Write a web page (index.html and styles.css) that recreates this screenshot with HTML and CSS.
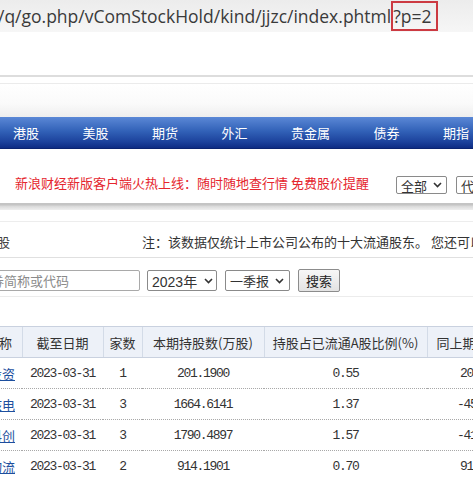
FILE: index.html
```html
<!DOCTYPE html>
<html lang="zh-CN">
<head>
<meta charset="utf-8">
<title>十大流通股东</title>
<link rel="stylesheet" href="styles.css">
</head>
<body>
<div class="page">
  <div class="urlbar"><span class="url">/q/go.php/vComStockHold/kind/jjzc/index.phtml</span><span class="hl">?p=2</span></div>
  <div class="rule-top"></div>
  <div class="band"></div>
  <nav class="nav">
    <a>港股</a><a>美股</a><a>期货</a><a>外汇</a><a>贵金属</a><a>债券</a><a>期指</a>
  </nav>
  <div class="promo">
    <span class="promo-text">新浪财经新版客户端火热上线：随时随地查行情 免费股价提醒</span>
    <span class="box box-all">全部<svg class="chev" width="9" height="6" viewBox="0 0 9 6"><path d="M1 1l3.5 3.5L8 1" fill="none" stroke="#333" stroke-width="1.6"/></svg></span>
    <span class="box box-code">代码</span>
  </div>
  <div class="sep"></div>
  <div class="notice">
    <span class="title">基金持股</span>
    <span class="note">注：该数据仅统计上市公司公布的十大流通股东。 您还可以</span>
  </div>
  <div class="search">
    <span class="input">请输入证券简称或代码</span>
    <span class="box box-year">2023年<svg class="chev" width="9" height="6" viewBox="0 0 9 6"><path d="M1 1l3.5 3.5L8 1" fill="none" stroke="#333" stroke-width="1.6"/></svg></span>
    <span class="box box-q">一季报<svg class="chev" width="9" height="6" viewBox="0 0 9 6"><path d="M1 1l3.5 3.5L8 1" fill="none" stroke="#333" stroke-width="1.6"/></svg></span>
    <span class="btn">搜索</span>
  </div>
  <table class="grid">
    <colgroup>
      <col class="w1"><col class="w2"><col class="w3"><col class="w4"><col class="w5"><col class="w6">
    </colgroup>
    <thead>
      <tr>
        <th class="c1">机构名称</th>
        <th>截至日期</th>
        <th>家数</th>
        <th>本期持股数(万股)</th>
        <th>持股占已流通A股比例(%)</th>
        <th class="c6">同上期增减(万股)</th>
      </tr>
    </thead>
    <tbody>
      <tr>
        <td class="c1"><a>国新投资</a></td>
        <td class="num">2023-03-31</td>
        <td class="num">1</td>
        <td class="num">201.1900</td>
        <td class="num">0.55</td>
        <td class="num last">201.1900</td>
      </tr>
      <tr>
        <td class="c1"><a>中国核电</a></td>
        <td class="num">2023-03-31</td>
        <td class="num">3</td>
        <td class="num">1664.6141</td>
        <td class="num">1.37</td>
        <td class="num last neg">-456.2310</td>
      </tr>
      <tr>
        <td class="c1"><a>华夏科创</a></td>
        <td class="num">2023-03-31</td>
        <td class="num">3</td>
        <td class="num">1790.4897</td>
        <td class="num">1.57</td>
        <td class="num last neg">-412.0870</td>
      </tr>
      <tr>
        <td class="c1"><a>顺丰物流</a></td>
        <td class="num">2023-03-31</td>
        <td class="num">2</td>
        <td class="num">914.1901</td>
        <td class="num">0.70</td>
        <td class="num last">914.1901</td>
      </tr>
    </tbody>
  </table>
</div>
</body>
</html>
```

FILE: styles.css
```css
html, body {
  margin: 0;
  padding: 0;
  background: #fff;
}
body {
  width: 473px;
  height: 477px;
  overflow: hidden;
  font-family: "Noto Sans CJK SC", "Noto Sans", sans-serif;
  color: #333;
}
.page {
  width: 473px;
  overflow: hidden;
}

/* address bar */
.urlbar {
  height: 32px;
  background: linear-gradient(#ececec, #f6f6f6);
  display: flex;
  align-items: center;
  margin-left: -2px;
  font-family: "Open Sans", "Noto Sans", sans-serif;
  font-size: 17.5px;
  color: #3a3a3a;
  white-space: nowrap;
}
.url, .hl {
  flex: none;
}
.hl {
  height: 30px;
  box-sizing: border-box;
  border: 2px solid #cc3a42;
  display: inline-flex;
  align-items: center;
  padding: 0 5px 0 0;
}

.rule-top {
  margin-top: 43px;
  height: 2px;
  background: #dddddd;
  border-bottom: 6px solid #fff;
}
.band {
  height: 34px;
  border-top: 1px solid #ebebeb;
  box-sizing: border-box;
  background: linear-gradient(#ffffff, #fafafa 60%, #eeeeee);
}

/* blue navigation */
.nav {
  height: 32px;
  display: flex;
  align-items: center;
  gap: 43.5px;
  padding-left: 13px;
  background: linear-gradient(#5b88d6, #3262b8 45%, #1c429c 80%, #0e2c84);
  border-bottom: 1px solid #0b2470;
  box-sizing: border-box;
  white-space: nowrap;
}
.nav a {
  flex: none;
  color: #fff;
  font-size: 13px;
  line-height: 1;
}

/* promo line */
.promo {
  height: 54px;
  box-sizing: border-box;
  padding: 25px 0 0 15px;
  display: flex;
  align-items: flex-start;
  white-space: nowrap;
}
.promo > * {
  flex: none;
}
.promo-text {
  color: #e5262e;
  font-size: 13px;
  line-height: 18px;
  width: 381px;
}
.box {
  height: 18px;
  box-sizing: border-box;
  border: 1px solid #8a8a8a;
  border-radius: 2px;
  background: #fff;
  display: inline-flex;
  align-items: center;
  font-size: 13px;
  color: #333;
  padding-left: 4px;
  gap: 6px;
}
.box-all {
  width: 51px;
  margin-top: 2px;
}
.box-code {
  width: 40px;
  margin-left: 9px;
  margin-top: 2px;
}
.chev {
  display: block;
}

.sep {
  height: 7px;
  background: linear-gradient(#c4c4c4 0, #c4c4c4 2px, #d8d8d8 3px, #efefef 7px);
  border-bottom: 11px solid #fff;
}

.notice {
  height: 37px;
  box-sizing: border-box;
  padding-top: 3px;
  border-top: 1px solid #ededed;
  border-bottom: 1px solid #e0e0e0;
  display: flex;
  align-items: center;
  white-space: nowrap;
  font-size: 13px;
}
.title {
  width: 184px;
  margin-left: -42px;
  font-size: 13px;
  color: #444;
  flex: none;
}
.note {
  flex: none;
  color: #333;
}

/* search row */
.search {
  height: 39px;
  box-sizing: border-box;
  border-bottom: 1px solid #ececec;
  padding-top: 12px;
  display: flex;
  align-items: flex-start;
  white-space: nowrap;
}
.input {
  flex: none;
  width: 206px;
  height: 21px;
  box-sizing: border-box;
  margin-left: -66px;
  border: 1px solid #a9a9a9;
  border-radius: 2px;
  padding-left: 4px;
  font-size: 13px;
  line-height: 19px;
  color: #8a8a8a;
}
.box-year, .box-q {
  height: 21px;
  font-size: 14px;
  flex: none;
}
.box-year {
  width: 70px;
  margin-left: 7px;
  gap: 7px;
  font-family: "Liberation Sans", "Noto Sans CJK SC", sans-serif;
}
.box-q {
  width: 65px;
  margin-left: 8px;
  gap: 6px;
  font-size: 13px;
}
.btn {
  flex: none;
  width: 42px;
  height: 23px;
  margin-left: 8px;
  margin-top: -1px;
  box-sizing: border-box;
  border: 1px solid #8c8c8c;
  border-radius: 2px;
  background: linear-gradient(#f7f7f7, #e3e3e3);
  font-size: 13px;
  color: #222;
  display: inline-flex;
  align-items: center;
  justify-content: center;
}

/* table */
.grid {
  margin-top: 29px;
  margin-left: -40px;
  border-collapse: collapse;
  table-layout: fixed;
  width: 537px;
  font-size: 13px;
}
.w1 { width: 62px; }
.w2 { width: 81px; }
.w3 { width: 39px; }
.w4 { width: 122px; }
.w5 { width: 163px; }
.w6 { width: 70px; }
.grid th {
  height: 30px;
  padding: 0;
  background: #edf1f8;
  border-top: 1px solid #c9d1df;
  border-bottom: 1px solid #c9d1df;
  border-left: 1px solid #d3dbe7;
  font-weight: normal;
  color: #333;
  white-space: nowrap;
  overflow: hidden;
}
.grid th.c1 {
  border-left: none;
  text-align: right;
  padding-right: 15px;
}
.grid th.c6 {
  text-align: left;
  padding-left: 9px;
}
.grid td {
  height: 30px;
  padding: 0;
  border-bottom: 1px dotted #a8a8a8;
  text-align: center;
  white-space: nowrap;
  overflow: hidden;
}
.grid td.c1 {
  text-align: right;
  padding-right: 7px;
}
.grid td.c1 a {
  color: #1d4f9e;
  text-decoration: underline;
}
.num {
  font-family: "Liberation Mono", monospace;
  letter-spacing: -1.3px;
  color: #333;
}
.grid td.last {
  text-align: left;
  padding-left: 33px;
}
.grid td.last.neg {
  padding-left: 30px;
}
```
